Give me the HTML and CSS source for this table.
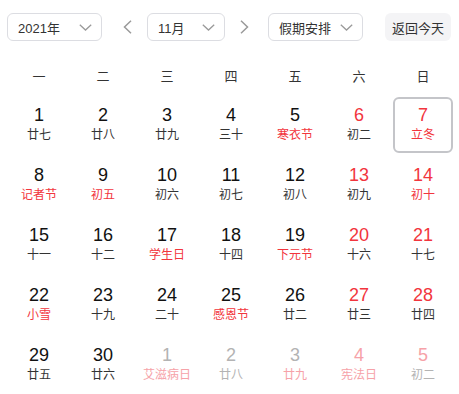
FILE: index.html
```html
<!DOCTYPE html>
<html lang="zh-CN">
<head>
<meta charset="utf-8">
<link rel="stylesheet" href="styles.css">
</head>
<body>
<div class="cal">
  <div class="toolbar">
    <div class="select year"><span>2021年</span><svg class="chev" width="13" height="7" viewBox="0 0 13 7"><path d="M0.8 0.8 L6.5 6 L12.2 0.8" fill="none" stroke="#9a9a9a" stroke-width="1.3"/></svg></div>
    <div class="arrow prev"><svg width="9" height="14" viewBox="0 0 9 14"><path d="M8 0.8 L1.5 7 L8 13.2" fill="none" stroke="#9a9a9a" stroke-width="1.5"/></svg></div>
    <div class="select month"><span>11月</span><svg class="chev" width="13" height="7" viewBox="0 0 13 7"><path d="M0.8 0.8 L6.5 6 L12.2 0.8" fill="none" stroke="#9a9a9a" stroke-width="1.3"/></svg></div>
    <div class="arrow next"><svg width="9" height="14" viewBox="0 0 9 14"><path d="M1 0.8 L7.5 7 L1 13.2" fill="none" stroke="#9a9a9a" stroke-width="1.5"/></svg></div>
    <div class="select holiday"><span>假期安排</span><svg class="chev" width="13" height="7" viewBox="0 0 13 7"><path d="M0.8 0.8 L6.5 6 L12.2 0.8" fill="none" stroke="#9a9a9a" stroke-width="1.3"/></svg></div>
    <div class="today">返回今天</div>
  </div>
  <div class="weekdays">
    <div>一</div><div>二</div><div>三</div><div>四</div><div>五</div><div>六</div><div>日</div>
  </div>
  <div class="days">
    <div class="day"><div class="inner"><span class="num">1</span><span class="lunar">廿七</span></div></div>
    <div class="day"><div class="inner"><span class="num">2</span><span class="lunar">廿八</span></div></div>
    <div class="day"><div class="inner"><span class="num">3</span><span class="lunar">廿九</span></div></div>
    <div class="day"><div class="inner"><span class="num">4</span><span class="lunar">三十</span></div></div>
    <div class="day"><div class="inner"><span class="num">5</span><span class="lunar red">寒衣节</span></div></div>
    <div class="day"><div class="inner"><span class="num red">6</span><span class="lunar">初二</span></div></div>
    <div class="day"><div class="inner selected"><span class="num red">7</span><span class="lunar red">立冬</span></div></div>

    <div class="day"><div class="inner"><span class="num">8</span><span class="lunar red">记者节</span></div></div>
    <div class="day"><div class="inner"><span class="num">9</span><span class="lunar red">初五</span></div></div>
    <div class="day"><div class="inner"><span class="num">10</span><span class="lunar">初六</span></div></div>
    <div class="day"><div class="inner"><span class="num">11</span><span class="lunar">初七</span></div></div>
    <div class="day"><div class="inner"><span class="num">12</span><span class="lunar">初八</span></div></div>
    <div class="day"><div class="inner"><span class="num red">13</span><span class="lunar">初九</span></div></div>
    <div class="day"><div class="inner"><span class="num red">14</span><span class="lunar red">初十</span></div></div>

    <div class="day"><div class="inner"><span class="num">15</span><span class="lunar">十一</span></div></div>
    <div class="day"><div class="inner"><span class="num">16</span><span class="lunar">十二</span></div></div>
    <div class="day"><div class="inner"><span class="num">17</span><span class="lunar red">学生日</span></div></div>
    <div class="day"><div class="inner"><span class="num">18</span><span class="lunar">十四</span></div></div>
    <div class="day"><div class="inner"><span class="num">19</span><span class="lunar red">下元节</span></div></div>
    <div class="day"><div class="inner"><span class="num red">20</span><span class="lunar">十六</span></div></div>
    <div class="day"><div class="inner"><span class="num red">21</span><span class="lunar">十七</span></div></div>

    <div class="day"><div class="inner"><span class="num">22</span><span class="lunar red">小雪</span></div></div>
    <div class="day"><div class="inner"><span class="num">23</span><span class="lunar">十九</span></div></div>
    <div class="day"><div class="inner"><span class="num">24</span><span class="lunar">二十</span></div></div>
    <div class="day"><div class="inner"><span class="num">25</span><span class="lunar red">感恩节</span></div></div>
    <div class="day"><div class="inner"><span class="num">26</span><span class="lunar">廿二</span></div></div>
    <div class="day"><div class="inner"><span class="num red">27</span><span class="lunar">廿三</span></div></div>
    <div class="day"><div class="inner"><span class="num red">28</span><span class="lunar">廿四</span></div></div>

    <div class="day"><div class="inner"><span class="num">29</span><span class="lunar">廿五</span></div></div>
    <div class="day"><div class="inner"><span class="num">30</span><span class="lunar">廿六</span></div></div>
    <div class="day other"><div class="inner"><span class="num">1</span><span class="lunar red">艾滋病日</span></div></div>
    <div class="day other"><div class="inner"><span class="num">2</span><span class="lunar">廿八</span></div></div>
    <div class="day other"><div class="inner"><span class="num">3</span><span class="lunar red">廿九</span></div></div>
    <div class="day other"><div class="inner"><span class="num red">4</span><span class="lunar red">宪法日</span></div></div>
    <div class="day other"><div class="inner"><span class="num red">5</span><span class="lunar">初二</span></div></div>
  </div>
</div>
</body>
</html>
```

FILE: styles.css
```css
html, body {
  margin: 0;
  padding: 0;
  background: #fff;
}
body {
  font-family: "Liberation Sans", Arial, "Noto Sans CJK SC", sans-serif;
  color: #222;
}
.cal {
  width: 448px;
  margin-left: 7px;
  padding-top: 13px;
}
.toolbar {
  display: flex;
  align-items: center;
  height: 28px;
}
.select {
  box-sizing: border-box;
  height: 28px;
  border: 1px solid #dcdde2;
  border-radius: 6px;
  display: flex;
  align-items: center;
  justify-content: space-between;
  padding: 0 9px 0 10px;
  font-size: 13px;
  color: #333;
}
.year { width: 95px; }
.month { width: 78px; margin-left: 10px; }
.holiday { width: 95px; margin-left: 14px; }
.arrow {
  width: 20px;
  height: 28px;
  display: flex;
  align-items: center;
  justify-content: center;
}
.prev { margin-left: 15px; }
.next { margin-left: 9px; }
.today {
  margin-left: 22px;
  width: 66px;
  height: 28px;
  box-sizing: border-box;
  background: #f4f4f6;
  border-radius: 6px;
  font-size: 13px;
  color: #333;
  display: flex;
  align-items: center;
  justify-content: center;
  font-family: "Noto Sans CJK SC", sans-serif;
}
.weekdays {
  margin-top: 14px;
  display: grid;
  grid-template-columns: repeat(7, 64px);
  height: 40px;
}
.weekdays div {
  display: flex;
  align-items: center;
  justify-content: center;
  font-size: 13px;
  color: #333;
  font-family: "Noto Sans CJK SC", sans-serif;
}
.days {
  display: grid;
  grid-template-columns: repeat(7, 64px);
  grid-auto-rows: 60px;
}
.day {
  padding: 2px;
}
.inner {
  box-sizing: border-box;
  height: 56px;
  border: 2px solid transparent;
  border-radius: 6px;
  display: flex;
  flex-direction: column;
  align-items: center;
  padding-top: 5px;
}
.inner.selected {
  border-color: #c4c5c9;
}
.num {
  font-size: 18px;
  line-height: 22px;
  color: #111;
}
.lunar {
  font-family: "Noto Sans CJK SC", sans-serif;
  font-size: 12px;
  line-height: 16px;
  color: #333;
}
.red {
  color: #f2353d;
}
.other .num { color: #b3b3b3; }
.other .lunar { color: #b3b3b3; }
.other .red { color: #f6a2a8; }
```
